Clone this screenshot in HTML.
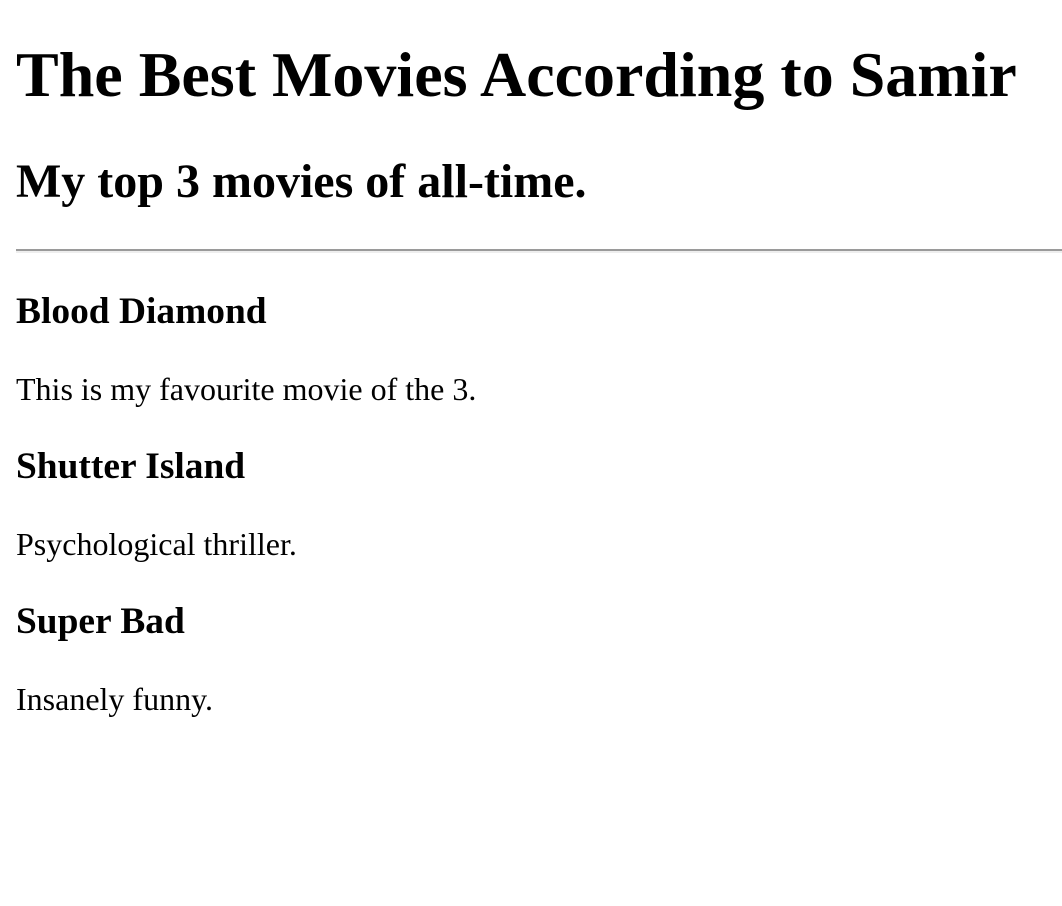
<!DOCTYPE html>
<html><head><meta charset="utf-8"><style>
html{zoom:2}
body{margin:8px 0 8px 8px;font-family:"Liberation Serif","Times New Roman",serif;color:#000;background:#fff;font-size:16px}
h1{font-size:32px;margin:19px 0 21px}
h2{font-size:24px;margin:20px 0}
hr{border:0;border-top:1px solid #9a9a9a;border-bottom:1px solid #eee;margin:8px 0}
h3{font-size:18.72px;margin:18.72px 0}
p{margin:16px 0}
</style></head><body>
<h1>The Best Movies According to Samir</h1>
<h2>My top 3 movies of all-time.</h2>
<hr>
<h3>Blood Diamond</h3>
<p>This is my favourite movie of the 3.</p>
<h3>Shutter Island</h3>
<p>Psychological thriller.</p>
<h3>Super Bad</h3>
<p>Insanely funny.</p>
</body></html>
